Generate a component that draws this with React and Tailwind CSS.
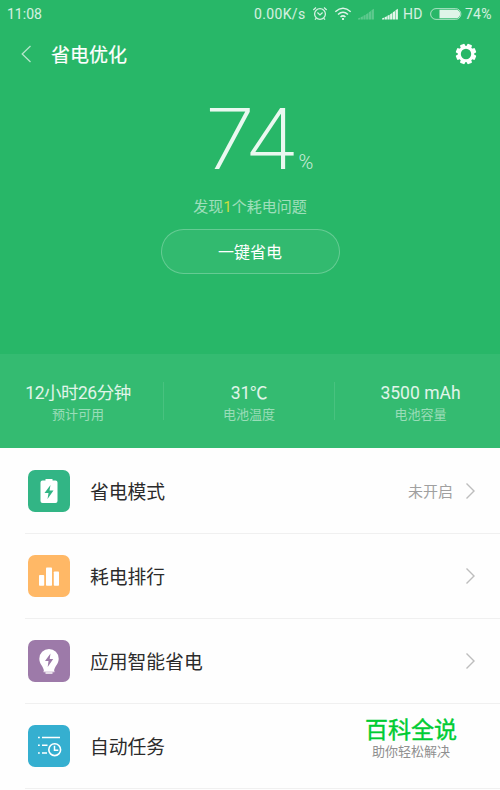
const Chevron = () => (
  <svg width="11" height="18" viewBox="0 0 11 18" fill="none" stroke="#bdbdbd" strokeWidth="1.4">
    <path d="M1.5 1.5 9 9 1.5 16.5" />
  </svg>
);

const Signal = ({ dim }) => (
  <svg width="17" height="12" viewBox="0 0 17 12" fill="#fff" opacity={dim ? 0.25 : 0.88}>
    <path d="M0 11.5V10.5l2.200-1v2zM2.7 11.5V9.2l2.200-1v3.3zM5.4 11.5V7.8l2.200-1v4.7zM8.1 11.5V6.2l2.200-1.2v6.5zM10.8 11.5V4.2l2.200-1.3v8.6zM13.5 11.5V2.2l2.400-1.5v10.8z" />
  </svg>
);

const StatusBar = () => (
  <div className="flex h-[27px] justify-between pl-[7px] pr-[8px] text-[14px] leading-[28px] text-white/80">
    <span>11:08</span>
    <div className="flex items-center">
      <span className="w-[51px] whitespace-nowrap tracking-[0.35px]">0.00K/s</span>
      <svg className="ml-[7px]" width="16" height="16" viewBox="0 0 16 16" fill="none" stroke="#fff" strokeOpacity=".8" strokeWidth="1.3">
        <circle cx="8" cy="8" r="5.4" />
        <path d="M5.4 6.500 8 8.900 10.6 6.500M1.3 3.900 4 1.400M14.7 3.900 12 1.400M4.2 12.300 3 13.700M11.8 12.300 13 13.700" />
      </svg>
      <svg className="ml-[6px]" width="18" height="14" viewBox="0 0 18 14" fill="none" stroke="#fff" strokeOpacity=".85" strokeWidth="1.500">
        <path d="M1.3 4.700Q9-2.300 16.700 4.700M4 7.500Q9 3 14 7.500M6.500 10Q9 7.800 11.500 10" />
        <circle cx="9" cy="12" r="1.100" fill="#fff" stroke="none" />
      </svg>
      <span className="ml-[6px]"><Signal dim /></span>
      <span className="ml-[7px]"><Signal /></span>
      <span className="ml-[4px] w-[21px] tracking-[0.3px]">HD</span>
      <svg className="ml-[6px]" width="32" height="12" viewBox="0 0 32 12">
        <rect x=".6" y=".6" width="30.300" height="10.800" rx="5.400" fill="none" stroke="#fff" strokeOpacity=".6" />
        <path d="M9.500 1.800h16.500a4.200 4.200 0 0 1 0 8.400H9.500z" fill="#fff" fillOpacity=".85" />
      </svg>
      <span className="ml-[3px] w-[27px] whitespace-nowrap tracking-[0.2px]">74%</span>
    </div>
  </div>
);

const Gear = () => (
  <svg width="22" height="22" viewBox="-11 -11 22 22">
    <g fill="#fff">
      {[0, 45, 90, 135].map((a) => (
        <rect key={a} x="-2.500" y="-10.300" width="5" height="20.600" rx="1" transform={`rotate(${a + 22.5})`} />
      ))}
      <circle r="8.300" />
    </g>
    <circle r="5.200" fill="#28b768" />
  </svg>
);

const stats = [
  ['12小时26分钟', '预计可用', 'w-[164px] pr-[7px]', 'tracking-[-0.5px]'],
  ['31℃', '电池温度', 'w-[171px]', 'tracking-[-0.3px]'],
  ['3500 mAh', '电池容量', 'w-[165px] pl-[6px]', ''],
];

const BatteryIcon = () => (
  <svg width="42" height="42" viewBox="0 0 42 42">
    <path d="M17.500 9h7v1.500h3a2 2 0 0 1 2 2v18.500a2 2 0 0 1-2 2h-13a2 2 0 0 1-2-2V12.500a2 2 0 0 1 2-2h3z" fill="#fff" />
    <path d="m22.500 15-6 8h4l-1 6 6-8.500h-4z" fill="#32b585" />
  </svg>
);
const BarsIcon = () => (
  <svg width="42" height="42" viewBox="0 0 42 42" fill="#fff">
    <rect x="11" y="20" width="5.200" height="10.800" rx=".8" />
    <rect x="18" y="12.500" width="6" height="18.300" rx=".8" />
    <rect x="25.800" y="16.500" width="5.200" height="14.300" rx=".8" />
  </svg>
);
const BulbIcon = () => (
  <svg width="42" height="42" viewBox="0 0 42 42">
    <path d="M21 9a9.700 9.700 0 0 1 9.700 9.700c0 5.300-4 7.300-4.700 12.300H16c-.7-5-4.700-7-4.700-12.300A9.700 9.700 0 0 1 21 9z" fill="#fff" />
    <path d="M15.500 30.800h11v1.500h-11zM17.500 32.300h7v1.700h-7z" fill="#fff" fillOpacity=".75" />
    <path d="m22.500 13.500-5.500 7.500h3.500l-.8 6 5.500-8h-3.500z" fill="#9d7aa9" />
  </svg>
);
const TaskIcon = () => (
  <svg width="42" height="42" viewBox="0 0 42 42" fill="none" stroke="#fff" strokeWidth="1.500">
    <path d="M10 12.500h1.800M14 12.500h18M10 20.300h1.800M14 20.300h5.500M10 28h1.800M14 28h5" />
    <circle cx="26.700" cy="24.700" r="5.900" strokeWidth="1.600" />
    <path d="M26.500 20.700v4.500h3.800" />
  </svg>
);

const rows = [
  ['省电模式', 'bg-[#32b585]', BatteryIcon, '未开启'],
  ['耗电排行', 'bg-[#ffb866]', BarsIcon],
  ['应用智能省电', 'bg-[#9d7aa9]', BulbIcon],
  ['自动任务', 'bg-[#35afd0]', TaskIcon],
];

export default function App() {
  return (
    <div className="relative flex h-[790px] w-[500px] flex-col overflow-hidden bg-[#fefefe] font-['Roboto','Noto_Sans_CJK_SC',sans-serif]">
      <header className="flex h-[448px] flex-none flex-col bg-[#28b768] text-white">
        <StatusBar />
        <div className="flex h-[54px] items-center pl-[21px] pr-[23px]">
          <svg width="11" height="18" viewBox="0 0 11 18" fill="none" stroke="#fff" strokeOpacity=".65" strokeWidth="1.300">
            <path d="M9.500 1 1.200 9l8.300 8" />
          </svg>
          <h1 className="ml-[19px] flex-1 pt-[4px] text-[19px] font-normal [-webkit-text-stroke:0.2px_white]">省电优化</h1>
          <Gear />
        </div>
        <div className="flex h-[273px] flex-none flex-col items-center">
          <div className="mt-[14px] flex h-[84px] items-end pl-[21px] text-white/90">
            <span className="inline-block scale-x-[1.08] font-['Inter'] text-[84px] font-extralight leading-[80px] tracking-[-5px]">74</span>
            <span className="mb-[5px] ml-[8px] text-[20px] font-light leading-6 text-white/75">%</span>
          </div>
          <p className="mt-[17px] text-[15px] leading-[22px] text-white/55">
            发现<span className="text-[#cddc39]">1</span>个耗电问题
          </p>
          <button className="mt-[11px] h-[45px] w-[179px] rounded-full border border-white/25 bg-white/5 pt-[2px] text-[16px] text-white">一键省电</button>
        </div>
        <div className="flex h-[94px] items-center bg-[#34bb71]">
          {stats.map(([value, label, cls, spacing], i) => (
            <div key={label} className={`flex h-[38px] flex-col items-center justify-center pt-[3px] ${cls} ${i < 2 ? 'border-r border-white/10' : ''}`}>
              <span className={`whitespace-nowrap text-[17.500px] leading-[24px] text-white/85 ${spacing}`}>{value}</span>
              <span className="text-[13px] leading-[20px] text-white/50">{label}</span>
            </div>
          ))}
        </div>
      </header>
      <main className="flex flex-col pt-px">
        {rows.map(([name, color, Icon, state]) => (
          <div key={name} className="ml-[25px] flex h-[85px] items-center border-b border-[#f0f0f0] pl-[3px] pr-[24px]">
            <div className={`h-[42px] w-[42px] rounded-[7px] ${color}`}><Icon /></div>
            <span className="ml-[20px] flex-1 pt-[5px] text-[18.800px] text-[#2b2b2b]">{name}</span>
            {state && <span className="mr-[12px] pt-[2px] text-[15px] text-[#a0a0a0]">{state}</span>}
            <Chevron />
          </div>
        ))}
      </main>
      <div className="absolute left-[351px] top-[711px] flex h-[56px] w-[134px] flex-col items-center bg-[#fefefe] pr-[14px]">
        <span className="pt-[1px] text-[23px] leading-[38px] text-[#00cc33] [-webkit-text-stroke:0.4px_#00cc33]">百科全说</span>
        <span className="text-[13px] leading-[4px] text-[#8f8f8f]">助你轻松解决</span>
      </div>
    </div>
  );
}
